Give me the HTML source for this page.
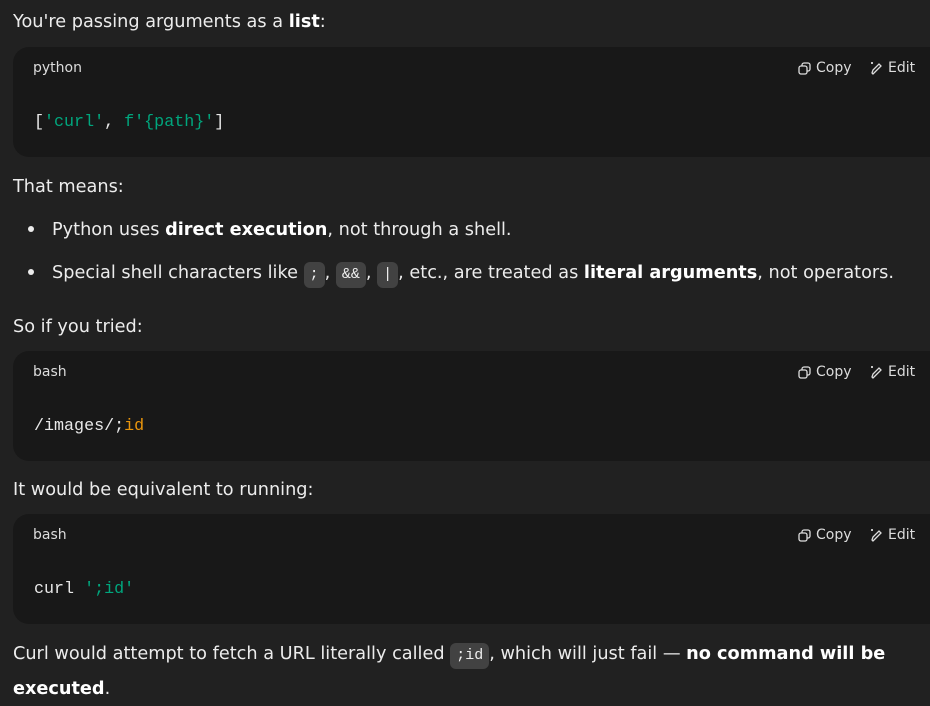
<!DOCTYPE html>
<html><head><style>
body{margin:0;background:#212121;color:#ececec;font-family:"DejaVu Sans",sans-serif;font-size:17.7px;width:930px;height:706px;overflow:hidden;position:relative}
.t{position:absolute;left:13px;white-space:nowrap;line-height:24px}
b{font-weight:bold;color:#fff}
.blk{position:absolute;left:13px;width:940px;height:110px;background:#181818;border-radius:16px}
.lab{position:absolute;left:20px;top:13px;font-size:14px;color:#dcdcdc}
.act{position:absolute;top:13px;font-size:14px;color:#dcdcdc;display:flex;align-items:center;gap:5px}
.code{position:absolute;left:21px;top:66px;font-family:"Liberation Mono",monospace;font-size:16.7px;color:#e8e8e8;white-space:pre}
.g{color:#00a67d}.o{color:#e9950c}
.ic{display:inline-block;background:#424242;border-radius:6px;font-family:"Liberation Mono",monospace;font-size:15px;padding:4px 6px;line-height:18px;color:#eee;vertical-align:0px}
.dot{position:absolute;left:28px;width:6px;height:6px;border-radius:50%;background:#ececec}
</style></head><body>
<div class="t" style="top:10px">You're passing arguments as a <b>list</b>:</div>
<div class="blk" style="top:47px"><div class="lab">python</div>
<div class="act" style="left:785px"><svg width="13" height="13" viewBox="0 0 13 13" fill="none" stroke="#ddd" stroke-width="1.3"><rect x="1" y="4" width="8" height="8" rx="2"/><path d="M4 4V3a2 2 0 0 1 2-2h4a2 2 0 0 1 2 2v4a2 2 0 0 1-2 2H9"/></svg>Copy</div>
<div class="act" style="left:857px"><svg width="13" height="13" viewBox="0 0 13 13" fill="none" stroke="#ddd" stroke-width="1.3"><path d="M3 12l-1-1 1-3 6-6 2 2-6 6z M1 1h2M2 0v2"/></svg>Edit</div>
<div class="code">[<span class="g">'curl'</span>, <span class="g">f'{path}'</span>]</div></div>
<div class="t" style="top:175px">That means:</div>
<div class="dot" style="top:226px"></div>
<div class="t" style="top:218px;left:52px">Python uses <b>direct execution</b>, not through a shell.</div>
<div class="dot" style="top:269px"></div>
<div class="t" style="top:261px;left:52px">Special shell characters like <span class="ic">;</span>, <span class="ic">&amp;&amp;</span>, <span class="ic">|</span>, etc., are treated as <b>literal arguments</b>, not operators.</div>
<div class="t" style="top:315px">So if you tried:</div>
<div class="blk" style="top:351px"><div class="lab">bash</div>
<div class="act" style="left:785px"><svg width="13" height="13" viewBox="0 0 13 13" fill="none" stroke="#ddd" stroke-width="1.3"><rect x="1" y="4" width="8" height="8" rx="2"/><path d="M4 4V3a2 2 0 0 1 2-2h4a2 2 0 0 1 2 2v4a2 2 0 0 1-2 2H9"/></svg>Copy</div>
<div class="act" style="left:857px"><svg width="13" height="13" viewBox="0 0 13 13" fill="none" stroke="#ddd" stroke-width="1.3"><path d="M3 12l-1-1 1-3 6-6 2 2-6 6z M1 1h2M2 0v2"/></svg>Edit</div>
<div class="code">/images/;<span class="o">id</span></div></div>
<div class="t" style="top:478px">It would be equivalent to running:</div>
<div class="blk" style="top:514px"><div class="lab">bash</div>
<div class="act" style="left:785px"><svg width="13" height="13" viewBox="0 0 13 13" fill="none" stroke="#ddd" stroke-width="1.3"><rect x="1" y="4" width="8" height="8" rx="2"/><path d="M4 4V3a2 2 0 0 1 2-2h4a2 2 0 0 1 2 2v4a2 2 0 0 1-2 2H9"/></svg>Copy</div>
<div class="act" style="left:857px"><svg width="13" height="13" viewBox="0 0 13 13" fill="none" stroke="#ddd" stroke-width="1.3"><path d="M3 12l-1-1 1-3 6-6 2 2-6 6z M1 1h2M2 0v2"/></svg>Edit</div>
<div class="code">curl <span class="g">';id'</span></div></div>
<div class="t" style="top:642px">Curl would attempt to fetch a URL literally called <span class="ic">;id</span>, which will just fail — <b>no command will be</b></div>
<div class="t" style="top:677px"><b>executed</b>.</div>
</body></html>
